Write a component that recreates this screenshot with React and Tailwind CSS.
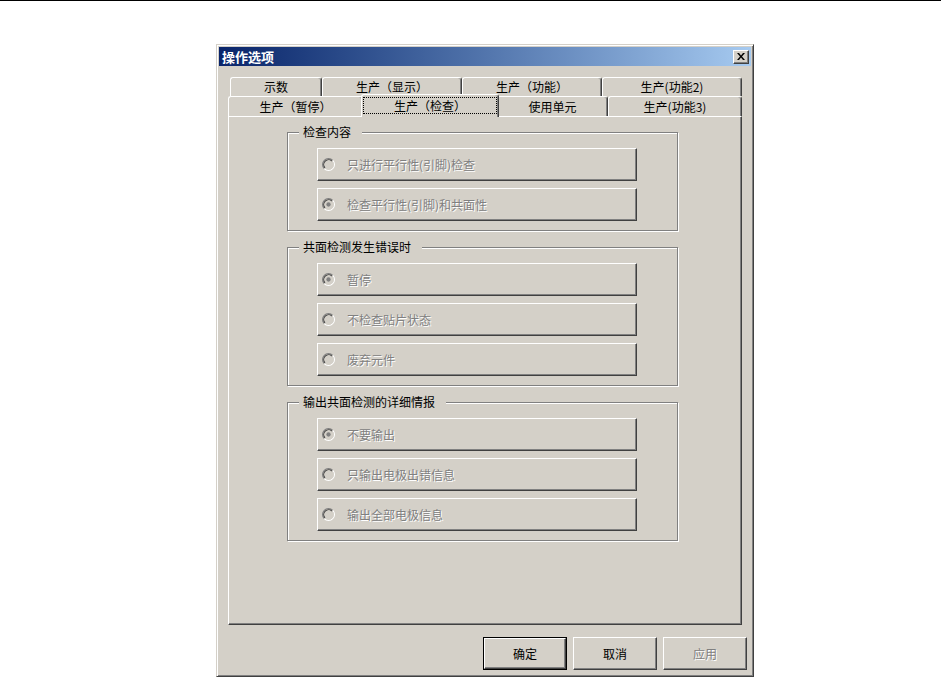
import React from "react";

const FONT = "font-['Noto_Sans_CJK_SC','Noto_Sans_CJK_SC',sans-serif]";

function Radio({ checked }) {
  return (
    <svg width="13" height="13" viewBox="0 0 12 12" className="shrink-0">
      <circle cx="6" cy="6" r="5" fill="#d4d0c8" />
      <path d="M2.11 9.89 A5.5 5.5 0 0 1 9.89 2.11" fill="none" stroke="#808080" strokeWidth="1" />
      <path d="M9.89 2.11 A5.5 5.5 0 0 1 2.11 9.89" fill="none" stroke="#ffffff" strokeWidth="1" />
      <path d="M2.82 9.18 A4.5 4.5 0 0 1 9.18 2.82" fill="none" stroke="#404040" strokeWidth="1" />
      <path d="M9.18 2.82 A4.5 4.5 0 0 1 2.82 9.18" fill="none" stroke="#d4d0c8" strokeWidth="1" />
      {checked && <circle cx="6" cy="6" r="2" fill="#808080" />}
    </svg>
  );
}

function RadioButton({ label, checked }) {
  return (
    <div className="flex items-center gap-[12px] w-[320px] h-[33px] pl-[4px] border-t border-l border-white border-r border-b border-r-[#404040] border-b-[#404040] shadow-[inset_-1px_-1px_0_#808080]">
      <Radio checked={checked} />
      <span className="text-[12px] leading-[14px] text-[#808080] [text-shadow:1px_1px_0_#ffffff]">{label}</span>
    </div>
  );
}

function Group({ title, items, className = "" }) {
  return (
    <div className={"relative w-[391px] border border-[#808080] shadow-[inset_1px_1px_0_#ffffff,1px_1px_0_#ffffff] pt-[15px] pb-[9px] pl-[29px] flex flex-col gap-[7px] " + className}>
      <span className="absolute left-[11px] -top-[8px] pl-[4px] pr-[11px] bg-[#d4d0c8] text-[12px] leading-[14px] text-black">{title}</span>
      {items.map((it) => (
        <RadioButton key={it.label} label={it.label} checked={it.checked} />
      ))}
    </div>
  );
}

function BackTab({ label, w }) {
  return (
    <div
      className="h-full flex items-center justify-center border-t border-l border-white border-r border-r-[#404040] shadow-[inset_-1px_0_0_#808080] rounded-tl-[3px] rounded-tr-[3px] text-[12px] leading-[14px] text-black"
      style={{ width: w }}
    >
      {label}
    </div>
  );
}

function Btn({ label, def, disabled }) {
  const inner = (
    <div className="w-full h-full flex items-center justify-center border-t border-l border-white border-r border-b border-r-[#404040] border-b-[#404040] shadow-[inset_-1px_-1px_0_#808080]">
      <span
        className={
          "text-[12px] leading-[14px] " +
          (disabled ? "text-[#808080] [text-shadow:1px_1px_0_#ffffff]" : "text-black")
        }
      >
        {label}
      </span>
    </div>
  );
  return (
    <div className={"w-[84px] h-[33px] bg-[#d4d0c8] " + (def ? "border border-black" : "")}>{inner}</div>
  );
}

export default function App() {
  return (
    <div className={"w-[941px] h-[677px] bg-white overflow-hidden border-t border-black " + FONT}>
      <div className="mt-[43px] ml-[216px] w-[538px] h-[633px] bg-[#d4d0c8] border border-t-[#d4d0c8] border-l-[#d4d0c8] border-r-[#404040] border-b-[#404040] shadow-[inset_1px_1px_0_#ffffff,inset_-1px_-1px_0_#808080] p-[2px] flex flex-col">
        {/* Title bar */}
        <div className="h-[19px] flex items-center justify-between pl-[3px] pr-[2px] bg-linear-to-r from-[#0a246a] to-[#a6caf0]">
          <span className="text-white font-bold text-[13px] leading-[15px]">操作选项</span>
          <div className="w-[16px] h-[14px] bg-[#d4d0c8] flex items-center justify-center border-t border-l border-white border-r border-b border-r-[#404040] border-b-[#404040] shadow-[inset_-1px_-1px_0_#808080]">
            <svg width="8" height="7" viewBox="0 0 8 7">
              <path d="M0 0 L2 0 L4 2.4 L6 0 L8 0 L5 3.5 L8 7 L6 7 L4 4.6 L2 7 L0 7 L3 3.5 Z" fill="#000" />
            </svg>
          </div>
        </div>

        {/* Content */}
        <div className="px-[9px] pt-[11px]">
          {/* Tab row 1 (back) */}
          <div className="h-[19px] flex pl-[2px]">
            <BackTab label="示数" w={92} />
            <BackTab label="生产（显示）" w={140} />
            <BackTab label="生产（功能）" w={140} />
            <BackTab label="生产(功能2)" w={140} />
          </div>
          {/* Tab row 2 (front) */}
          <div className="h-[20px] flex">
            <BackTab label="生产（暂停）" w={135} />
            <div className="relative z-10 -mx-[2px] -mt-[2px] w-[138px] h-[23px] shrink-0 bg-[#d4d0c8] border-t border-l border-white border-r border-r-[#404040] shadow-[inset_-1px_0_0_#808080] rounded-tl-[3px] rounded-tr-[3px] flex">
              <div className="flex-1 mx-[1px] mt-[2px] mb-[3px] border border-dotted border-black flex items-center justify-center text-[12px] leading-[14px] text-black">
                生产（检查）
              </div>
            </div>
            <BackTab label="使用单元" w={111} />
            <BackTab label="生产(功能3)" w={134} />
          </div>

          {/* Panel */}
          <div className="h-[509px] border border-t-white border-l-white border-r-[#404040] border-b-[#404040] shadow-[inset_-1px_-1px_0_#808080] pt-[15px] pl-[58px]">
            <Group
              title="检查内容"
              items={[
                { label: "只进行平行性(引脚)检查" },
                { label: "检查平行性(引脚)和共面性", checked: true },
              ]}
            />
            <Group
              className="mt-[16px]"
              title="共面检测发生错误时"
              items={[
                { label: "暂停", checked: true },
                { label: "不检查贴片状态" },
                { label: "废弃元件" },
              ]}
            />
            <Group
              className="mt-[16px]"
              title="输出共面检测的详细情报"
              items={[
                { label: "不要输出", checked: true },
                { label: "只输出电极出错信息" },
                { label: "输出全部电极信息" },
              ]}
            />
          </div>
        </div>

        {/* Buttons */}
        <div className="mt-[12px] flex justify-end gap-[6px] pr-[4px]">
          <Btn label="确定" def />
          <Btn label="取消" />
          <Btn label="应用" disabled />
        </div>
      </div>
    </div>
  );
}
